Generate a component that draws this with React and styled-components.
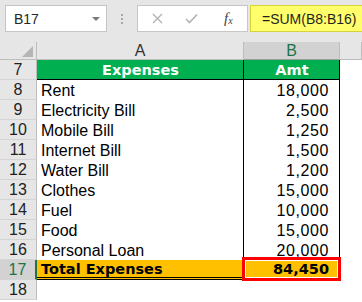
import React from 'react';
import styled, {createGlobalStyle} from "styled-components";

const GlobalStyle = createGlobalStyle`
  body {
    margin: 0;
    background: #ffffff;
    overflow: hidden;
  }
`;

const Page = styled.div`
  width: 362px;
  height: 302px;
  overflow: hidden;
  font-family: "Liberation Sans", Arial, sans-serif;
`;

const Toolbar = styled.div`
  height: 42px;
  box-sizing: border-box;
  background: #e6e6e6;
  display: flex;
  align-items: flex-start;
  padding: 5px 0 0 5px;
`;

const NameBox = styled.div`
  width: 102px;
  height: 27px;
  box-sizing: border-box;
  background: #fff;
  border: 1px solid #c6c6c6;
  display: flex;
  align-items: center;
  justify-content: space-between;
  padding: 0 6px 0 8px;
  font-size: 14px;
  color: #262626;
`;

const Caret = styled.span`
  width: 0;
  height: 0;
  border-left: 4px solid transparent;
  border-right: 4px solid transparent;
  border-top: 4px solid #7a7a7a;
`;

const Grip = styled.div`
  width: 30px;
  height: 27px;
  display: flex;
  flex-direction: column;
  align-items: center;
  justify-content: center;
  gap: 2px;

  span {
    width: 2px;
    height: 2px;
    background: #a8a8a8;
  }
`;

const FormulaButtons = styled.div`
  width: 111px;
  height: 27px;
  box-sizing: border-box;
  background: #fff;
  border: 1px solid #c6c6c6;
  display: flex;
  align-items: center;
  padding-left: 14px;
  gap: 22px;
`;

const Fx = styled.span`
  font-family: "Liberation Serif", "Times New Roman", serif;
  font-style: italic;
  font-size: 15px;
  color: #444;
  margin-left: 4px;

  sub {
    font-size: 10px;
    vertical-align: baseline;
    position: relative;
    top: 1px;
  }
`;

const FormulaInput = styled.div`
  flex: 1;
  margin-left: 2px;
  height: 27px;
  box-sizing: border-box;
  background: #ffff6b;
  border: 1px solid #d8d23a;
  border-right: none;
  display: flex;
  align-items: center;
  padding-left: 11px;
  font-size: 14px;
  color: #1f1f1f;
`;

const Sheet = styled.div`
  display: grid;
  grid-template-columns: 37px 207px 96px 1fr;
  grid-template-rows: 18px;
  grid-auto-rows: 20px;
`;

const Corner = styled.div`
  background: #e6e6e6;
  border-right: 1px solid #bdbdbd;
  border-bottom: 1px solid #bdbdbd;
  display: flex;
  align-items: flex-end;
  justify-content: flex-end;
  padding: 0 3px 2px 0;
`;

const ColHead = styled.div`
  background: ${({$active}) => $active ? '#d2d2d2' : '#e6e6e6'};
  color: ${({$active}) => $active ? '#217346' : '#333'};
  border-right: 1px solid #bdbdbd;
  border-bottom: 1px solid ${({$active}) => $active ? '#9a9a9a' : '#bdbdbd'};
  display: flex;
  align-items: center;
  justify-content: center;
  font-size: 16px;
`;

const RowHead = styled.div`
  background: ${({$active}) => $active ? '#d2d2d2' : '#e6e6e6'};
  color: ${({$active}) => $active ? '#217346' : '#222'};
  border-right: ${({$active}) => $active ? '2px solid #217346' : '1px solid #bdbdbd'};
  border-bottom: 1px solid #d4d4d4;
  box-sizing: border-box;
  display: flex;
  align-items: center;
  justify-content: center;
  font-size: 16px;
  padding-top: 1px;
`;

const Cell = styled.div`
  position: relative;
  box-sizing: border-box;
  display: flex;
  align-items: center;
  justify-content: ${({$align}) => $align || 'flex-start'};
  padding: 1px ${({$align}) => $align === 'flex-end' ? '10px' : '3px'} 0 4px;
  background: ${({$bg}) => $bg || '#fff'};
  color: ${({$head}) => $head ? '#fff' : '#000'};
  border-right: ${({$edge}) => $edge ? '1px solid #000' : 'none'};
  border-bottom: ${({$under}) => $under || 'none'};
  font-family: ${({$bold}) => $bold ? '"DejaVu Sans", Verdana, sans-serif' : '"Liberation Sans", Arial, sans-serif'};
  font-weight: ${({$bold}) => $bold ? 700 : 400};
  font-size: ${({$bold}) => $bold ? '14.5px' : '16px'};
  letter-spacing: ${({$num, $bold}) => $num && !$bold ? '0.6px' : '0'};
  white-space: nowrap;
`;

const Picked = styled(Cell)`
  &::after {
    content: "";
    position: absolute;
    top: -3px;
    left: -2px;
    right: -2px;
    bottom: -4px;
    border: 3px solid #ff0000;
    box-shadow: inset 0 0 0 1px #fff;
  }
`;

const Blank = styled.div`
  background: #fff;
`;

const rows = [
    ['Rent', '18,000'],
    ['Electricity Bill', '2,500'],
    ['Mobile Bill', '1,250'],
    ['Internet Bill', '1,500'],
    ['Water Bill', '1,200'],
    ['Clothes', '15,000'],
    ['Fuel', '10,000'],
    ['Food', '15,000'],
    ['Personal Loan', '20,000'],
];

const App = () => {
    return (
        <Page>
            <GlobalStyle/>
            <Toolbar>
                <NameBox>
                    B17
                    <Caret/>
                </NameBox>
                <Grip><span/><span/><span/></Grip>
                <FormulaButtons>
                    <svg width="11" height="11" viewBox="0 0 11 11">
                        <path d="M1 1L10 10M10 1L1 10" stroke="#b3b3b3" strokeWidth="1.4"/>
                    </svg>
                    <svg width="13" height="11" viewBox="0 0 13 11">
                        <path d="M1 6L4.5 9.5L12 1.5" stroke="#b3b3b3" strokeWidth="1.6" fill="none"/>
                    </svg>
                    <Fx>f<sub>x</sub></Fx>
                </FormulaButtons>
                <FormulaInput>=SUM(B8:B16)</FormulaInput>
            </Toolbar>
            <Sheet>
                <Corner>
                    <svg width="11" height="11" viewBox="0 0 11 11">
                        <polygon points="11,0 11,11 0,11" fill="#b5b5b5"/>
                    </svg>
                </Corner>
                <ColHead>A</ColHead>
                <ColHead $active>B</ColHead>
                <ColHead/>

                <RowHead>7</RowHead>
                <Cell $bg="#00b050" $head $bold $edge $align="center" $under="1px solid #000">Expenses</Cell>
                <Cell $bg="#00b050" $head $bold $edge $align="center" $under="1px solid #000">Amt</Cell>
                <Blank/>

                {rows.map(([label, amt], i) => (
                    <React.Fragment key={label}>
                        <RowHead>{i + 8}</RowHead>
                        <Cell $edge>{label}</Cell>
                        <Cell $edge $num $align="flex-end">{amt}</Cell>
                        <Blank/>
                    </React.Fragment>
                ))}

                <RowHead $active>17</RowHead>
                <Cell $bg="#ffc000" $bold $edge $under="3px double #000">Total Expenses</Cell>
                <Picked $bg="#ffc000" $bold $edge $num $align="flex-end" $under="3px double #000">84,450</Picked>
                <Blank/>

                <RowHead>18</RowHead>
                <Blank/>
                <Blank/>
                <Blank/>
            </Sheet>
        </Page>
    );
};

export default App;
